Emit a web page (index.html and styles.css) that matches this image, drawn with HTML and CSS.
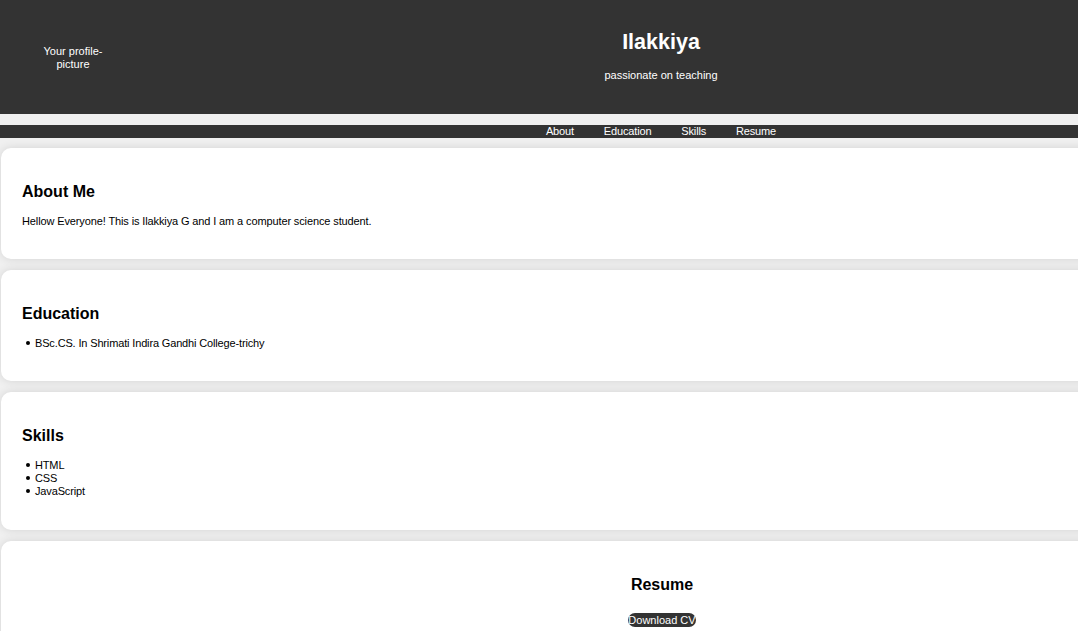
FILE: index.html
```html
<!DOCTYPE html>
<html lang="en">
<head>
<meta charset="utf-8">
<title>Ilakkiya</title>
<link rel="stylesheet" href="styles.css">
</head>
<body>
<div class="page">
  <header class="header">
    <div class="profile">Your profile-picture</div>
    <div class="title-block">
      <h1 class="name">Ilakkiya</h1>
      <p class="tagline">passionate on teaching</p>
    </div>
    <div class="spacer"></div>
  </header>
  <nav class="nav">
    <a href="#about">About</a>
    <a href="#education">Education</a>
    <a href="#skills">Skills</a>
    <a href="#resume">Resume</a>
  </nav>
  <section class="card" id="about">
    <h2>About Me</h2>
    <p>Hellow Everyone! This is Ilakkiya G and I am a computer science student.</p>
  </section>
  <section class="card" id="education">
    <h2>Education</h2>
    <ul>
      <li>BSc.CS. In Shrimati Indira Gandhi College-trichy</li>
    </ul>
  </section>
  <section class="card card-skills" id="skills">
    <h2>Skills</h2>
    <ul>
      <li>HTML</li>
      <li>CSS</li>
      <li>JavaScript</li>
    </ul>
  </section>
  <section class="card card-center" id="resume">
    <h2>Resume</h2>
    <div class="btn-row"><a class="btn" href="#">Download CV</a></div>
  </section>
</div>
</body>
</html>
```
FILE: styles.css
```css
html {
  overflow: hidden;
}
body {
  margin: 0;
  background: #f0f0f0;
  font-family: "Liberation Sans", Arial, sans-serif;
  font-size: 11px;
  color: #000;
}
.page {
  width: 1322px;
}
.header {
  background: #333;
  color: #fff;
  height: 114px;
  display: grid;
  grid-template-columns: 1fr auto 1fr;
  align-items: center;
  margin-bottom: 11px;
}
.profile {
  width: 66px;
  margin: 2px 0 0 40px;
  text-align: center;
  line-height: 13px;
}
.title-block {
  text-align: center;
  margin-bottom: 4px;
}
.name {
  font-size: 21.5px;
  margin: 0 0 14px;
}
.tagline {
  margin: 0;
}
.nav {
  background: #333;
  text-align: center;
  height: 13px;
  line-height: 13px;
  margin-bottom: 10px;
  letter-spacing: -0.15px;
}
.nav a {
  color: #fff;
  text-decoration: none;
  margin: 0 13.5px;
}
.card {
  background: #fff;
  margin: 0 0 11px 1px;
  padding: 22px 20px 20px 21px;
  border-radius: 10px;
  box-shadow: 0 0 10px rgba(0, 0, 0, 0.12);
}
.card h2 {
  font-size: 16px;
  margin: 13.3px 0;
}
.card p {
  margin: 11px 0 12px;
  letter-spacing: -0.12px;
}
.card ul {
  list-style: none;
  margin: 14.3px 0 11px;
  padding: 0;
  line-height: 13px;
  letter-spacing: -0.15px;
}
.card-skills ul {
  margin: 13.3px 0 12px;
}
.card li::before {
  content: "";
  display: inline-block;
  width: 4px;
  height: 4px;
  border-radius: 50%;
  background: #000;
  margin: 0 5px 0 4px;
  vertical-align: 2px;
}
.card-center {
  text-align: center;
}
.btn-row {
  margin-top: 20px;
  line-height: 13px;
}
.btn {
  background: #333;
  color: #fff;
  text-decoration: none;
  border-radius: 7px;
  padding: 1px 0;
}
```
